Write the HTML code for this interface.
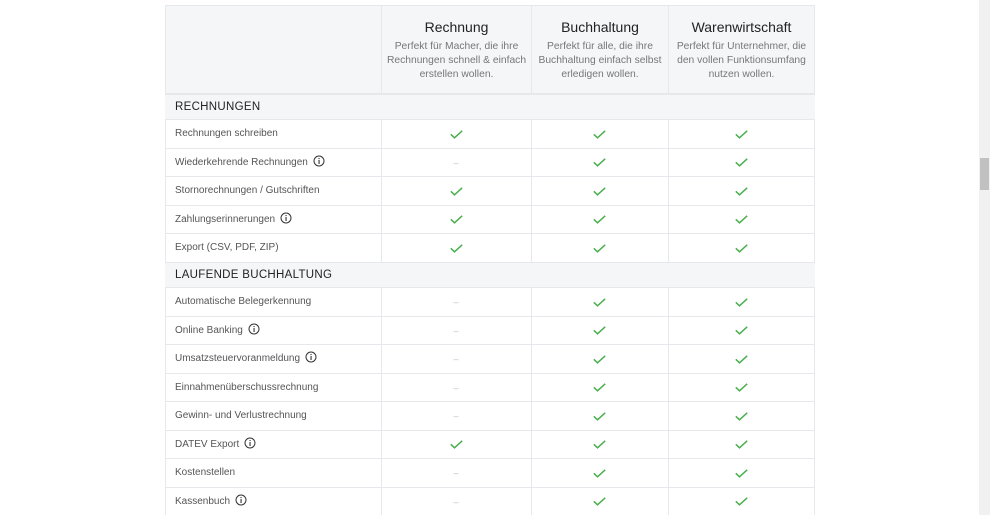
<!DOCTYPE html>
<html><head><meta charset="utf-8"><style>
*{margin:0;padding:0;box-sizing:border-box}
html,body{width:990px;height:515px;overflow:hidden}
body{background:#fff;font-family:"Liberation Sans",sans-serif;position:relative}
.tbl{position:absolute;left:165px;top:5px;width:650px;height:520px;border-left:1px solid #e6e8ec;border-right:1px solid #e6e8ec;border-top:1px solid #e6e8ec}
.hdr{position:absolute;left:165px;top:5px;width:650px;height:89px;background:#f5f6f8;border:1px solid #e6e8ec}
.sec{position:absolute;left:165px;width:650px;height:25px;background:#f5f6f8;border-top:1px solid #e6e8ec;font-size:11.5px;letter-spacing:.3px;color:#222;padding-left:10px;line-height:25px}
.row{position:absolute;left:165px;width:650px;height:29px;border-top:1px solid #e6e8ec}
.row .l{position:absolute;left:10px;top:0;line-height:28px;font-size:10px;color:#555}
.vl{position:absolute;top:5px;width:1px;height:520px;background:#e6e8ec}
.c{position:absolute;top:0;height:28px;display:flex;align-items:center;justify-content:center}
.c1{left:216px;width:150px}.c2{left:366px;width:137px}.c3{left:503px;width:147px}
.d{color:#bbb;font-size:9px}
.ht{position:absolute;top:19px;text-align:center}
.ht b{display:block;font-weight:normal;font-size:14px;color:#222;margin-bottom:5px}
.ht span{display:block;font-size:10.3px;color:#777;line-height:14px}
.i{display:inline-block;vertical-align:middle;margin-left:5px;margin-top:-2px}
.sb{position:absolute;left:979px;top:0;width:11px;height:515px;background:#f1f1f1}
.th{position:absolute;left:980px;top:158px;width:9px;height:32px;background:#c1c1c1}
</style></head><body>
<div class="hdr"></div>
<div class="tbl"></div>
<div class="vl" style="left:381px"></div>
<div class="vl" style="left:531px"></div>
<div class="vl" style="left:668px"></div>
<div class="ht" style="left:382px;width:149px"><b>Rechnung</b><span>Perfekt für Macher, die ihre<br>Rechnungen schnell &amp; einfach<br>erstellen wollen.</span></div>
<div class="ht" style="left:532px;width:136px"><b>Buchhaltung</b><span>Perfekt für alle, die ihre<br>Buchhaltung einfach selbst<br>erledigen wollen.</span></div>
<div class="ht" style="left:669px;width:145px"><b>Warenwirtschaft</b><span>Perfekt für Unternehmer, die<br>den vollen Funktionsumfang<br>nutzen wollen.</span></div>

<div class="sec" style="top:94px">RECHNUNGEN</div>
<div class="sec" style="top:262px">LAUFENDE BUCHHALTUNG</div>

<svg width="0" height="0" style="position:absolute"><defs>
<symbol id="ck" viewBox="0 0 13 9"><polyline points="0.8,4.3 4.5,7.8 12.2,0.8" fill="none" stroke="#4caf50" stroke-width="1.5"/></symbol>
<symbol id="in" viewBox="0 0 12 12"><circle cx="6" cy="6" r="5" fill="none" stroke="#333" stroke-width="1"/><rect x="5.5" y="5" width="1.1" height="4" fill="#333"/><rect x="5.5" y="3" width="1.1" height="1.1" fill="#333"/></symbol>
</defs></svg>

<div class="row" style="top:119px"><div class="l">Rechnungen schreiben</div><div class="c c1"><svg width="13" height="9"><use href="#ck"/></svg></div><div class="c c2"><svg width="13" height="9"><use href="#ck"/></svg></div><div class="c c3"><svg width="13" height="9"><use href="#ck"/></svg></div></div>
<div class="row" style="top:147.5px"><div class="l">Wiederkehrende Rechnungen<svg class="i" width="12" height="12"><use href="#in"/></svg></div><div class="c c1 d">–</div><div class="c c2"><svg width="13" height="9"><use href="#ck"/></svg></div><div class="c c3"><svg width="13" height="9"><use href="#ck"/></svg></div></div>
<div class="row" style="top:176px"><div class="l">Stornorechnungen / Gutschriften</div><div class="c c1"><svg width="13" height="9"><use href="#ck"/></svg></div><div class="c c2"><svg width="13" height="9"><use href="#ck"/></svg></div><div class="c c3"><svg width="13" height="9"><use href="#ck"/></svg></div></div>
<div class="row" style="top:204.5px"><div class="l">Zahlungserinnerungen<svg class="i" width="12" height="12"><use href="#in"/></svg></div><div class="c c1"><svg width="13" height="9"><use href="#ck"/></svg></div><div class="c c2"><svg width="13" height="9"><use href="#ck"/></svg></div><div class="c c3"><svg width="13" height="9"><use href="#ck"/></svg></div></div>
<div class="row" style="top:233px"><div class="l">Export (CSV, PDF, ZIP)</div><div class="c c1"><svg width="13" height="9"><use href="#ck"/></svg></div><div class="c c2"><svg width="13" height="9"><use href="#ck"/></svg></div><div class="c c3"><svg width="13" height="9"><use href="#ck"/></svg></div></div>

<div class="row" style="top:287px"><div class="l">Automatische Belegerkennung</div><div class="c c1 d">–</div><div class="c c2"><svg width="13" height="9"><use href="#ck"/></svg></div><div class="c c3"><svg width="13" height="9"><use href="#ck"/></svg></div></div>
<div class="row" style="top:315.5px"><div class="l">Online Banking<svg class="i" width="12" height="12"><use href="#in"/></svg></div><div class="c c1 d">–</div><div class="c c2"><svg width="13" height="9"><use href="#ck"/></svg></div><div class="c c3"><svg width="13" height="9"><use href="#ck"/></svg></div></div>
<div class="row" style="top:344px"><div class="l">Umsatzsteuervoranmeldung<svg class="i" width="12" height="12"><use href="#in"/></svg></div><div class="c c1 d">–</div><div class="c c2"><svg width="13" height="9"><use href="#ck"/></svg></div><div class="c c3"><svg width="13" height="9"><use href="#ck"/></svg></div></div>
<div class="row" style="top:372.5px"><div class="l">Einnahmenüberschussrechnung</div><div class="c c1 d">–</div><div class="c c2"><svg width="13" height="9"><use href="#ck"/></svg></div><div class="c c3"><svg width="13" height="9"><use href="#ck"/></svg></div></div>
<div class="row" style="top:401px"><div class="l">Gewinn- und Verlustrechnung</div><div class="c c1 d">–</div><div class="c c2"><svg width="13" height="9"><use href="#ck"/></svg></div><div class="c c3"><svg width="13" height="9"><use href="#ck"/></svg></div></div>
<div class="row" style="top:429.5px"><div class="l">DATEV Export<svg class="i" width="12" height="12"><use href="#in"/></svg></div><div class="c c1"><svg width="13" height="9"><use href="#ck"/></svg></div><div class="c c2"><svg width="13" height="9"><use href="#ck"/></svg></div><div class="c c3"><svg width="13" height="9"><use href="#ck"/></svg></div></div>
<div class="row" style="top:458px"><div class="l">Kostenstellen</div><div class="c c1 d">–</div><div class="c c2"><svg width="13" height="9"><use href="#ck"/></svg></div><div class="c c3"><svg width="13" height="9"><use href="#ck"/></svg></div></div>
<div class="row" style="top:486.5px"><div class="l">Kassenbuch<svg class="i" width="12" height="12"><use href="#in"/></svg></div><div class="c c1 d">–</div><div class="c c2"><svg width="13" height="9"><use href="#ck"/></svg></div><div class="c c3"><svg width="13" height="9"><use href="#ck"/></svg></div></div>

<div class="sb"></div><div class="th"></div>
</body></html>
